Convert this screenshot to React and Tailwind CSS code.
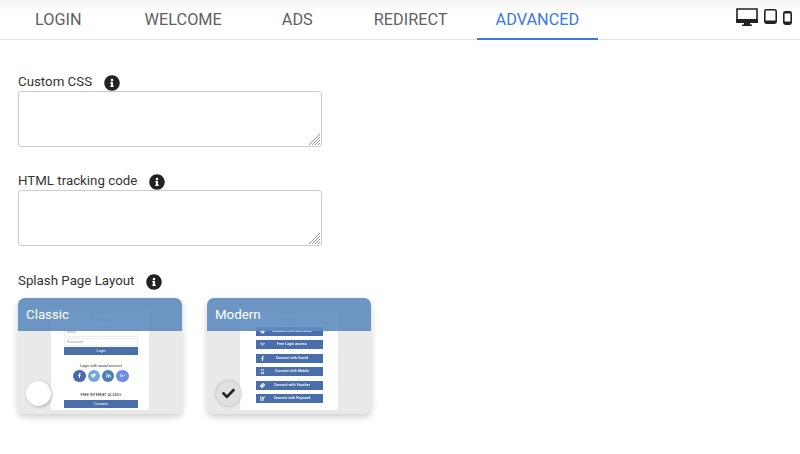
import { FaInfoCircle, FaCheck, FaFacebookF, FaTwitter, FaLinkedinIn, FaGooglePlusG, FaHome, FaWifi, FaMobileAlt, FaTicketAlt, FaEdit } from 'react-icons/fa'

const tabs = [
  { name: 'LOGIN', cls: 'ml-[16px] text-[#5f5f5f] border-transparent' },
  { name: 'WELCOME', cls: 'ml-[25px] text-[#5f5f5f] border-transparent' },
  { name: 'ADS', cls: 'ml-[22px] text-[#5f5f5f] border-transparent' },
  { name: 'REDIRECT', cls: 'ml-[23px] text-[#5f5f5f] border-transparent' },
  { name: 'ADVANCED', cls: 'ml-[10px] text-[#3b78e7] border-[#3b78e7]' },
]

const modernRows = [
  { label: 'Connect with Username', icon: FaHome },
  { label: 'Free Login access', icon: FaWifi },
  { label: 'Connect with Social', icon: FaFacebookF },
  { label: 'Connect with Mobile', icon: FaMobileAlt },
  { label: 'Connect with Voucher', icon: FaTicketAlt, iconCls: '-rotate-45' },
  { label: 'Connect with Keyword', icon: FaEdit },
]

const socials = [
  { icon: FaFacebookF, cls: 'bg-[#4d6aa8]' },
  { icon: FaTwitter, cls: 'bg-[#74a7e0]' },
  { icon: FaLinkedinIn, cls: 'bg-[#4a7fb5]' },
  { icon: FaGooglePlusG, cls: 'bg-[#6d90dc]' },
]

function Label({ text }) {
  return (
    <div className="flex items-center h-[18px] text-[13.3px] text-[#333]">
      <span>{text}</span>
      <FaInfoCircle className="ml-[12px] mt-[2px] text-[#222] text-[16px]" />
    </div>
  )
}

function Field({ label, className }) {
  return (
    <div className={className}>
      <Label text={label} />
      <div className="relative w-[304px] h-[56px]">
        <textarea className="block w-full h-full resize-none border border-[#ccc] rounded-[3px] outline-none" />
        <svg className="absolute right-[1px] bottom-[1px] pointer-events-none" width="13" height="13" viewBox="0 0 13 13" stroke="#777" strokeWidth="0.8">
          <path d="M1 12L12 1M4 12l8-8M7 12l5-5M10 12l2-2" />
        </svg>
      </div>
    </div>
  )
}

function DeviceIcons() {
  return (
    <div className="absolute right-[8px] top-[8px] flex items-start">
      <svg width="22" height="18" viewBox="0 0 22 18">
        <path d="M1 1h20v13H1z" fill="#fff" stroke="#222" strokeWidth="1.6" />
        <path d="M0 11h22v4H0zM8 15h6v1.5h2V18H6v-1.5h2z" fill="#222" />
      </svg>
      <svg className="ml-[6px] mt-[1px]" width="13" height="15" viewBox="0 0 13 15">
        <rect x="0.8" y="0.8" width="11.4" height="13.4" rx="1.6" fill="#fff" stroke="#222" strokeWidth="1.6" />
        <path d="M1 11.5h11V14H1z" fill="#222" />
      </svg>
      <svg className="ml-[6px] mt-[2.5px]" width="9" height="14" viewBox="0 0 9 14">
        <rect x="0.8" y="0.8" width="7.4" height="12.4" rx="1.6" fill="#fff" stroke="#222" strokeWidth="1.6" />
        <path d="M1 10.5h7V13H1zM1 1h7v1.5H1z" fill="#222" />
      </svg>
    </div>
  )
}

function Card({ title, children, selected }) {
  return (
    <div className="relative w-[164px] h-[116px] rounded-[7px] bg-[#e9e9e9] overflow-hidden shadow-[0_3px_7px_rgba(0,0,0,0.2)]">
      <div className="ml-[33px] mt-[12px] w-[98px] h-[100px] bg-white rounded-[2px] text-[3.7px] text-[#444] blur-[0.3px]">
        {children}
      </div>
      <div className="absolute inset-x-0 top-0 h-[33px] bg-[#5f8cbf]/90 flex items-center pl-[8px] pt-[1px] text-[13.3px] text-white">
        {title}
      </div>
      {selected ? (
        <div className="absolute left-[9px] top-[83px] w-[24.5px] h-[24.5px] rounded-full bg-[#e0e0e0] flex items-center justify-center shadow-[0_0_3px_rgba(0,0,0,0.3)]">
          <FaCheck className="text-[#222] text-[13px]" />
        </div>
      ) : (
        <div className="absolute left-[8px] top-[83px] w-[25px] h-[25px] rounded-full bg-white shadow-[1px_1px_3px_rgba(0,0,0,0.25)]" />
      )}
    </div>
  )
}

function ClassicPreview() {
  return (
    <div className="flex flex-col items-center pl-[2px]">
      <div className="h-[10px] mt-[8px] text-[#777]">Please Login</div>
      <div className="w-[74px] h-[9px] border border-[#eee] pl-[2px] text-[#999] leading-[7px]">Email</div>
      <div className="w-[74px] h-[8px] mt-[1px] border border-[#eee] pl-[2px] text-[#999] leading-[6px]">Password</div>
      <div className="w-[74px] h-[8px] mt-[1px] bg-[#4a6ea9] text-white text-center leading-[8px]">Login</div>
      <div className="mt-[8px] h-[6px] leading-[6px] text-[#333]">Login with social account</div>
      <div className="mt-[0.5px] flex gap-[1.8px]">
        {socials.map((s, i) => {
          const Icon = s.icon
          return (
            <div key={i} className={`w-[12.5px] h-[12.5px] rounded-full flex items-center justify-center text-white text-[5px] ${s.cls}`}>
              <Icon />
            </div>
          )
        })}
      </div>
      <div className="mt-[11px] h-[5px] leading-[5px] text-[#222]">FREE INTERNET ACCESS</div>
      <div className="w-[74px] h-[8px] mt-[1.5px] bg-[#4a6ea9] text-white text-center leading-[8px]">Connect</div>
    </div>
  )
}

function ModernPreview() {
  return (
    <div className="flex flex-col items-center">
      <div className="h-[9.7px] mt-[7px] leading-[6px] text-[#777]">Please login</div>
      {modernRows.map((r) => {
        const Icon = r.icon
        return (
          <div key={r.label} className="relative w-[67px] h-[9.3px] mb-[4.2px] pl-[6px] bg-[#4a6ea9] text-white text-center font-medium leading-[9.3px]">
            <Icon className={`absolute left-[4.5px] top-[2.2px] text-[5px] ${r.iconCls || ''}`} />
            {r.label}
          </div>
        )
      })}
    </div>
  )
}

export default function App() {
  return (
    <div className="w-[800px] h-[454px] bg-white overflow-hidden relative font-['Roboto',sans-serif]">
      <div className="h-[40px] flex border-b border-[#e4e4e4] bg-gradient-to-b from-[#f4f4f4] to-white to-[30%]">
        {tabs.map((t) => (
          <div
            key={t.name}
            className={`h-[40px] px-[19px] pt-[2px] flex items-center text-[16.3px] border-b-2 ${t.cls}`}
          >
            {t.name}
          </div>
        ))}
      </div>
      <DeviceIcons />
      <div className="pl-[18px] pt-[33px]">
        <Field label="Custom CSS" />
        <Field label="HTML tracking code" className="mt-[25px]" />
        <div className="mt-[26px]">
          <Label text="Splash Page Layout" />
        </div>
        <div className="mt-[8px] flex gap-[25px]">
          <Card title="Classic"><ClassicPreview /></Card>
          <Card title="Modern" selected><ModernPreview /></Card>
        </div>
      </div>
    </div>
  )
}
